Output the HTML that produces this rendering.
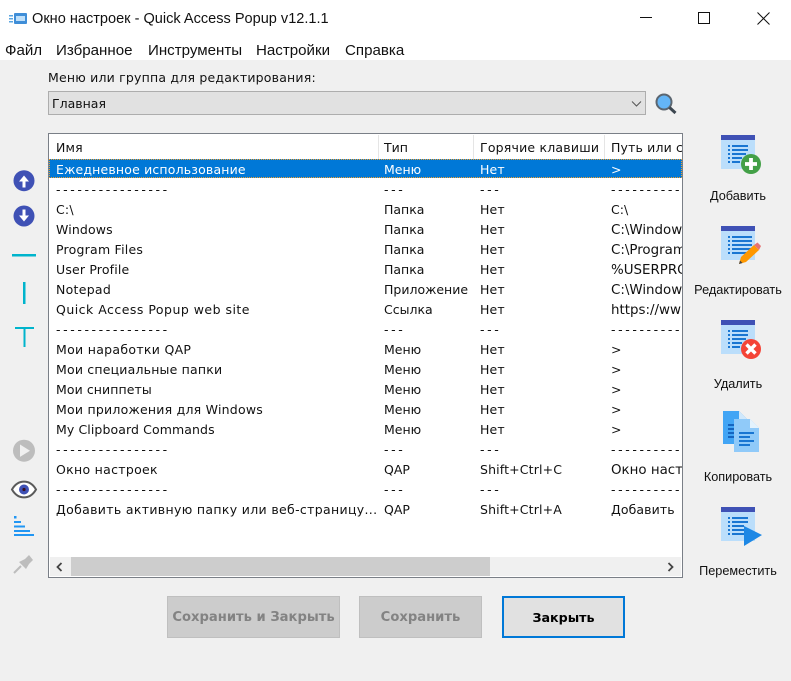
<!DOCTYPE html>
<html><head><meta charset="utf-8"><style>
html,body{margin:0;padding:0}
body{width:791px;height:681px;position:relative;overflow:hidden;background:#f0f0f0;font-family:"DejaVu Sans",sans-serif;font-size:12.5px;color:#111}
.a{position:absolute;white-space:nowrap}
.m{position:absolute;top:42px;line-height:18px;font-family:"Liberation Sans",sans-serif;font-size:15.1px;color:#111}
.r{position:absolute;left:0;width:633px;height:20px}
.r span{position:absolute;top:1px;line-height:20px;white-space:nowrap}
.c1{left:7px;letter-spacing:.2px}.c2{left:335px}.c3{left:431px;letter-spacing:.15px}.c4{left:562px;width:71px;overflow:hidden}
.r span.w{font-size:13.4px;top:2px}
.r span.d{letter-spacing:2.6px}
.lbl{position:absolute;font-family:"Liberation Sans",sans-serif;font-size:12.7px;text-align:center;width:110px;line-height:16px;color:#111}
.btn{position:absolute;top:596px;height:42px;box-sizing:border-box;text-align:center;line-height:42px;font-weight:bold;font-size:13.15px}
</style></head><body>
<div class="a" style="left:0;top:0;width:791px;height:60px;background:#fff"></div>
<svg class="a" style="left:8px;top:11px" width="20" height="16" viewBox="0 0 20 16"><rect x="6" y="2" width="13" height="11" rx="1" fill="#3f8ed8"/><rect x="8" y="5" width="9" height="5" fill="#bfe0fa"/><rect x="1" y="4" width="4" height="1.5" fill="#5aa5e0"/><rect x="1" y="7" width="4" height="1.5" fill="#5aa5e0"/><rect x="1" y="10" width="4" height="1.5" fill="#5aa5e0"/></svg>
<div class="a" style="left:32px;top:9px;line-height:20px;font-family:'Liberation Sans',sans-serif;font-size:14.55px;color:#111">Окно настроек - Quick Access Popup v12.1.1</div>
<div class="a" style="left:640px;top:17px;width:12px;height:1px;background:#111"></div>
<div class="a" style="left:698px;top:12px;width:10px;height:10px;border:1px solid #111"></div>
<svg class="a" style="left:757px;top:12px" width="13" height="13"><path d="M.5.5l12 12M12.500.5l-12 12" stroke="#111" fill="none"/></svg>
<div class="m" style="left:5px">Файл</div>
<div class="m" style="left:56px">Избранное</div>
<div class="m" style="left:148px">Инструменты</div>
<div class="m" style="left:256px">Настройки</div>
<div class="m" style="left:345px">Справка</div>

<div class="a" style="left:48px;top:70px;line-height:16px;letter-spacing:.2px">Меню или группа для редактирования:</div>
<div class="a" style="left:48px;top:91px;width:596px;height:22px;background:#e1e1e1;border:1px solid #adadad;line-height:23px"><span style="margin-left:3px">Главная</span></div>
<svg class="a" style="left:631px;top:100px" width="12" height="8"><path d="M1 1.500l4.500 4.500 4.500-4.500" stroke="#555" fill="none"/></svg>
<svg class="a" style="left:654px;top:92px" width="24" height="24" viewBox="0 0 24 24"><circle cx="10" cy="10" r="7.500" fill="#64b5f6" stroke="#5c6670" stroke-width="2"/><path d="M15.500 15.500l6 5.500" stroke="#3c4650" stroke-width="3"/></svg>

<div class="a" style="left:48px;top:133px;width:633px;height:443px;background:#fff;border:1px solid #7a7f87;overflow:hidden">
 <div class="a" style="left:329px;top:1px;width:1px;height:24px;background:#e5e5e5"></div>
 <div class="a" style="left:424px;top:1px;width:1px;height:24px;background:#e5e5e5"></div>
 <div class="a" style="left:555px;top:1px;width:1px;height:24px;background:#e5e5e5"></div>
 <div class="r" style="top:3px"><span class="c1">Имя</span><span class="c2">Тип</span><span class="c3" style="letter-spacing:.2px">Горячие клавиши</span><span class="c4" style="letter-spacing:.15px">Путь или с</span></div>
 <div class="r" style="top:25px;height:19px;background:#0078d7;color:#fff;outline:1px dotted #f0a030;outline-offset:-1px"><span class="c1" style="letter-spacing:.17px">Ежедневное использование</span><span class="c2">Меню</span><span class="c3">Нет</span><span class="c4">&gt;</span></div>
 <div class="r" style="top:45px"><span class="c1 d">----------------</span><span class="c2 d">---</span><span class="c3 d">---</span><span class="c4 d">----------</span></div>
 <div class="r" style="top:65px"><span class="c1">C:\</span><span class="c2">Папка</span><span class="c3">Нет</span><span class="c4">C:\</span></div>
 <div class="r" style="top:85px"><span class="c1" style="letter-spacing:.14px">Windows</span><span class="c2">Папка</span><span class="c3">Нет</span><span class="c4 w">C:\Windows</span></div>
 <div class="r" style="top:105px"><span class="c1" style="letter-spacing:.23px">Program Files</span><span class="c2">Папка</span><span class="c3">Нет</span><span class="c4 w">C:\Program</span></div>
 <div class="r" style="top:125px"><span class="c1" style="letter-spacing:.17px">User Profile</span><span class="c2">Папка</span><span class="c3">Нет</span><span class="c4 w">%USERPRO</span></div>
 <div class="r" style="top:145px"><span class="c1" style="letter-spacing:.28px">Notepad</span><span class="c2">Приложение</span><span class="c3">Нет</span><span class="c4 w">C:\Windows</span></div>
 <div class="r" style="top:165px"><span class="c1" style="letter-spacing:.48px">Quick Access Popup web site</span><span class="c2">Ссылка</span><span class="c3">Нет</span><span class="c4 w">https://ww</span></div>
 <div class="r" style="top:185px"><span class="c1 d">----------------</span><span class="c2 d">---</span><span class="c3 d">---</span><span class="c4 d">----------</span></div>
 <div class="r" style="top:205px"><span class="c1" style="letter-spacing:.3px">Мои наработки QAP</span><span class="c2">Меню</span><span class="c3">Нет</span><span class="c4">&gt;</span></div>
 <div class="r" style="top:225px"><span class="c1" style="letter-spacing:.19px">Мои специальные папки</span><span class="c2">Меню</span><span class="c3">Нет</span><span class="c4">&gt;</span></div>
 <div class="r" style="top:245px"><span class="c1" style="letter-spacing:.08px">Мои сниппеты</span><span class="c2">Меню</span><span class="c3">Нет</span><span class="c4">&gt;</span></div>
 <div class="r" style="top:265px"><span class="c1" style="letter-spacing:.23px">Мои приложения для Windows</span><span class="c2">Меню</span><span class="c3">Нет</span><span class="c4">&gt;</span></div>
 <div class="r" style="top:285px"><span class="c1" style="letter-spacing:.1px">My Clipboard Commands</span><span class="c2">Меню</span><span class="c3">Нет</span><span class="c4">&gt;</span></div>
 <div class="r" style="top:305px"><span class="c1 d">----------------</span><span class="c2 d">---</span><span class="c3 d">---</span><span class="c4 d">----------</span></div>
 <div class="r" style="top:325px"><span class="c1" style="letter-spacing:.3px">Окно настроек</span><span class="c2">QAP</span><span class="c3">Shift+Ctrl+C</span><span class="c4 w">Окно настр</span></div>
 <div class="r" style="top:345px"><span class="c1 d">----------------</span><span class="c2 d">---</span><span class="c3 d">---</span><span class="c4 d">----------</span></div>
 <div class="r" style="top:365px"><span class="c1" style="letter-spacing:.33px">Добавить активную папку или веб-страницу...</span><span class="c2">QAP</span><span class="c3">Shift+Ctrl+A</span><span class="c4" style="letter-spacing:.1px">Добавить</span></div>
 <div class="a" style="left:1px;top:423px;width:631px;height:19px;background:#f0f0f0"></div>
 <div class="a" style="left:22px;top:423px;width:419px;height:19px;background:#cdcdcd"></div>
 <svg class="a" style="left:6px;top:428px" width="9" height="10"><path d="M6.500 1l-4 4 4 4" stroke="#444" stroke-width="1.800" fill="none"/></svg>
 <svg class="a" style="left:617px;top:428px" width="9" height="10"><path d="M2.500 1l4 4-4 4" stroke="#444" stroke-width="1.800" fill="none"/></svg>
</div>

<!-- left icons -->
<svg class="a" style="left:0;top:160px" width="48" height="420" viewBox="0 0 48 420">
 <circle cx="24" cy="20.700" r="10.500" fill="#3f51b5"/><path d="M24 15.500l-5 6h3.500v6h3v-6h3.500z" fill="#fff"/>
 <circle cx="24" cy="56" r="10.500" fill="#3f51b5"/><path d="M24 61.500l-5-6h3.500v-6h3v6h3.500z" fill="#fff"/>
 <rect x="12" y="94" width="24" height="2.500" fill="#00b4cc"/>
 <rect x="23" y="122" width="2.500" height="22" fill="#00b4cc"/>
 <path d="M15 168h19M24.500 168v19" stroke="#00b4cc" stroke-width="2" fill="none"/>
 <circle cx="24" cy="290.700" r="11" fill="#bdbdbd"/><path d="M20 284.500l10 6.200-10 6.200z" fill="#f0f0f0"/>
 <path d="M12 329.500c6-10.500 18-10.500 24 0c-6 10.500-18 10.500-24 0z" fill="#fff" stroke="#5a5a5a" stroke-width="2"/><circle cx="24" cy="329.500" r="5" fill="#3f51b5"/><circle cx="24" cy="329.500" r="1.600" fill="#3a1020"/>
 <g fill="#2196f3"><rect x="14" y="356" width="2.500" height="2.500"/><rect x="14" y="361" width="7" height="2"/><rect x="14" y="365.500" width="11" height="2"/><rect x="14" y="370" width="16" height="2"/><rect x="14" y="374" width="20" height="2"/></g>
 <path d="M14 413l7-7" stroke="#bdbdbd" stroke-width="2" fill="none"/><path d="M19 402l7 7 3-5 4-4-4-5-4 4z" fill="#bdbdbd"/>
</svg>

<!-- right icons -->
<svg class="a" style="left:720px;top:134px" width="48" height="42" viewBox="0 0 48 42"><rect x="1" y="1" width="34" height="34" fill="#bbdefb"/><rect x="1" y="1" width="34" height="5" fill="#3f51b5"/><g fill="#1976d2"><rect x="8" y="11" width="2" height="2"/><rect x="8" y="15" width="2" height="2"/><rect x="8" y="19" width="2" height="2"/><rect x="8" y="23" width="2" height="2"/><rect x="8" y="27" width="2" height="2"/><rect x="12" y="11" width="16" height="2"/><rect x="12" y="15" width="16" height="2"/><rect x="12" y="19" width="14" height="2"/><rect x="12" y="23" width="10" height="2"/><rect x="12" y="27" width="8" height="2"/></g><circle cx="31" cy="30" r="10" fill="#43a047"/><path d="M31 24v12M25 30h12" stroke="#fff" stroke-width="3.800"/></svg>
<svg class="a" style="left:720px;top:225px" width="48" height="42" viewBox="0 0 48 42"><rect x="1" y="1" width="34" height="34" fill="#bbdefb"/><rect x="1" y="1" width="34" height="5" fill="#3f51b5"/><g fill="#1976d2"><rect x="8" y="11" width="2" height="2"/><rect x="8" y="15" width="2" height="2"/><rect x="8" y="19" width="2" height="2"/><rect x="8" y="23" width="2" height="2"/><rect x="8" y="27" width="2" height="2"/><rect x="12" y="11" width="20" height="2"/><rect x="12" y="15" width="20" height="2"/><rect x="12" y="19" width="20" height="2"/><rect x="12" y="23" width="20" height="2"/><rect x="12" y="27" width="18" height="2"/></g><path d="M19 39l2-7 13-12 5 5-13 12z" fill="#ff9800"/><path d="M19 39l1-3.500 2.500 2.500z" fill="#444"/><path d="M34 20l3.500-2.500 3.500 3.500-2 4z" fill="#e57373"/></svg>
<svg class="a" style="left:720px;top:319px" width="48" height="42" viewBox="0 0 48 42"><rect x="1" y="1" width="34" height="34" fill="#bbdefb"/><rect x="1" y="1" width="34" height="5" fill="#3f51b5"/><g fill="#1976d2"><rect x="8" y="11" width="2" height="2"/><rect x="8" y="15" width="2" height="2"/><rect x="8" y="19" width="2" height="2"/><rect x="8" y="23" width="2" height="2"/><rect x="8" y="27" width="2" height="2"/><rect x="12" y="11" width="16" height="2"/><rect x="12" y="15" width="16" height="2"/><rect x="12" y="19" width="14" height="2"/><rect x="12" y="23" width="10" height="2"/><rect x="12" y="27" width="8" height="2"/></g><circle cx="31" cy="30" r="10" fill="#f44336"/><path d="M26.500 25.500l9 9M35.500 25.500l-9 9" stroke="#fff" stroke-width="3.400"/></svg>
<svg class="a" style="left:720px;top:410px" width="48" height="46" viewBox="0 0 48 46"><path d="M3 1h16l8 8v25H3z" fill="#42a5f5"/><path d="M19 1l8 8H19z" fill="#cfe8fc"/><g fill="#1565c0"><rect x="8" y="14" width="6" height="2"/><rect x="8" y="18" width="6" height="2"/><rect x="8" y="22" width="6" height="2"/><rect x="8" y="26" width="6" height="2"/></g><path d="M14 9h16l9 9v24H14z" fill="#90caf9"/><path d="M30 9l9 9h-9z" fill="#e3f2fd"/><g fill="#1976d2"><rect x="19" y="22" width="15" height="2"/><rect x="19" y="26" width="11" height="2"/><rect x="19" y="30" width="15" height="2"/><rect x="19" y="34" width="11" height="2"/></g></svg>
<svg class="a" style="left:720px;top:506px" width="48" height="46" viewBox="0 0 48 46"><rect x="1" y="1" width="34" height="34" fill="#bbdefb"/><rect x="1" y="1" width="34" height="5" fill="#3f51b5"/><g fill="#1976d2"><rect x="8" y="11" width="2" height="2"/><rect x="8" y="15" width="2" height="2"/><rect x="8" y="19" width="2" height="2"/><rect x="8" y="23" width="2" height="2"/><rect x="8" y="27" width="2" height="2"/><rect x="12" y="11" width="16" height="2"/><rect x="12" y="15" width="16" height="2"/><rect x="12" y="19" width="12" height="2"/><rect x="12" y="23" width="12" height="2"/><rect x="12" y="27" width="12" height="2"/></g><path d="M24 20l18 9-18 11z" fill="#1e88e5"/></svg>
<div class="lbl" style="left:683px;top:188px">Добавить</div>
<div class="lbl" style="left:683px;top:282px">Редактировать</div>
<div class="lbl" style="left:683px;top:376px">Удалить</div>
<div class="lbl" style="left:683px;top:469px">Копировать</div>
<div class="lbl" style="left:683px;top:563px">Переместить</div>

<div class="btn" style="left:167px;width:173px;background:#cccccc;border:1px solid #bfbfbf;color:#838383">Сохранить и Закрыть</div>
<div class="btn" style="left:359px;width:123px;background:#cccccc;border:1px solid #bfbfbf;color:#838383">Сохранить</div>
<div class="btn" style="left:502px;width:123px;background:#e1e1e1;border:2px solid #0078d7;line-height:39px;color:#000;font-size:12.7px">Закрыть</div>
</body></html>
